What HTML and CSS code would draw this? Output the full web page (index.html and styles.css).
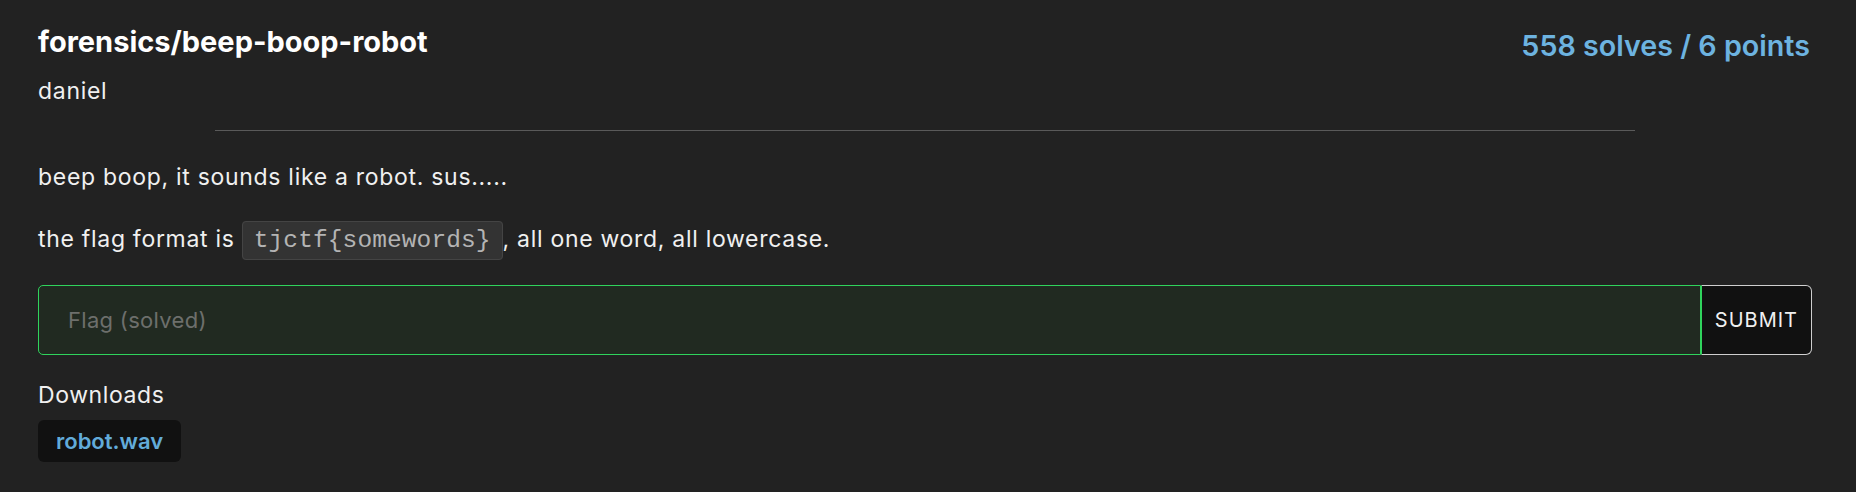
FILE: index.html
```html
<!DOCTYPE html>
<html lang="en">
<head>
<meta charset="utf-8">
<title>forensics/beep-boop-robot</title>
<link rel="stylesheet" href="styles.css">
</head>
<body>
<div class="card">
  <div class="head">
    <div class="head-left">
      <h1 class="title">forensics/beep-boop-robot</h1>
      <div class="author">daniel</div>
    </div>
    <div class="points">558 solves / 6 points</div>
  </div>
  <hr class="divider">
  <div class="desc">
    <p class="para">beep boop, it sounds like a robot. sus.....</p>
    <p class="para">the flag format is <code class="code">tjctf{somewords}</code>, all one word, all lowercase.</p>
  </div>
  <form class="flag-form">
    <input class="flag-input" type="text" placeholder="Flag (solved)">
    <button class="submit" type="button">Submit</button>
  </form>
  <div class="downloads-label">Downloads</div>
  <div class="downloads">
    <a class="download" href="#">robot.wav</a>
  </div>
</div>
</body>
</html>
```

FILE: styles.css
```css
html, body {
  margin: 0;
  padding: 0;
  background: #222222;
}

body {
  font-family: Inter, "Noto Sans", sans-serif;
  color: #f2f2f2;
  width: 1856px;
  height: 492px;
  overflow: hidden;
}

.card {
  padding: 25px 44px 0 38px;
}

.head {
  display: flex;
  justify-content: space-between;
  align-items: flex-start;
}

.title {
  margin: 0;
  font-size: 29px;
  line-height: 34px;
  font-weight: 700;
  color: #ffffff;
}

.author {
  margin-top: 16px;
  font-size: 23px;
  line-height: 33px;
  letter-spacing: 0.7px;
  color: #f0f0f0;
}

.points {
  font-size: 28.7px;
  line-height: 34px;
  font-weight: 600;
  color: #6db3e0;
  padding: 4px 2px 0 0;
}

.divider {
  width: 80%;
  margin: 22px auto 0;
  border: 0;
  border-top: 1px solid #5a5a5a;
  height: 0;
}

.desc {
  padding-top: 30px;
}

.para {
  margin: 0 0 29px;
  font-size: 23px;
  line-height: 33px;
  letter-spacing: 0.7px;
  color: #f0f0f0;
}

.para:last-child {
  margin-bottom: 0;
}

.code {
  font-family: "Liberation Mono", "DejaVu Sans Mono", monospace;
  font-size: 24.5px;
  letter-spacing: 0.1px;
  color: #b4b4b4;
  background: #333333;
  border: 1px solid #444444;
  border-radius: 4px;
  padding: 5px 11px 5px;
}

.flag-form {
  display: flex;
  margin-top: 28px;
  height: 70px;
}

.flag-input {
  flex: 1;
  min-width: 0;
  box-sizing: border-box;
  height: 70px;
  margin: 0;
  padding: 0 29px;
  background: #212a21;
  border: 1px solid #2fd35c;
  border-radius: 5px 0 0 5px;
  font-family: Inter, "Noto Sans", sans-serif;
  font-size: 22px;
  letter-spacing: 0.3px;
  color: #e0e0e0;
  outline: none;
}

.flag-input::placeholder {
  color: #6d6f6c;
}

.submit {
  box-sizing: border-box;
  height: 70px;
  margin: 0;
  padding: 0 13px;
  background: #111111;
  border: 1px solid #cfcfcf;
  border-left-color: #2fd35c;
  border-radius: 0 6px 6px 0;
  font-family: Inter, "Noto Sans", sans-serif;
  font-size: 20px;
  letter-spacing: 1px;
  text-transform: uppercase;
  color: #f0f0f0;
}

.downloads-label {
  margin-top: 24px;
  font-size: 23px;
  line-height: 33px;
  letter-spacing: 0.6px;
  color: #f0f0f0;
}

.downloads {
  display: flex;
  margin-top: 8px;
}

.download {
  display: block;
  height: 42px;
  line-height: 42px;
  padding: 0 18px;
  background: #111111;
  border-radius: 6px;
  font-size: 22px;
  font-weight: 600;
  color: #62abd9;
  text-decoration: none;
}
```
